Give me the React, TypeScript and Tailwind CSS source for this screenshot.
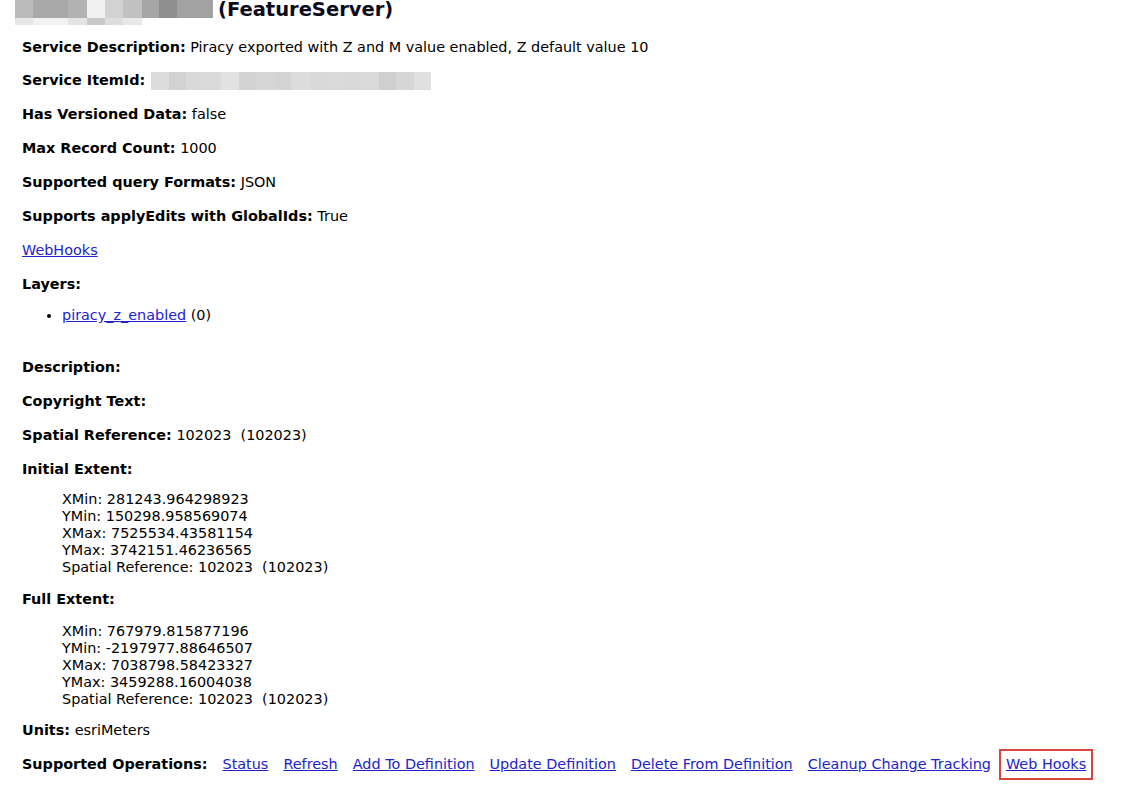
import React from "react";

const F = { fontFamily: '"DejaVu Sans", Verdana, sans-serif' };

function Row({ label, children, className = "" }: { label: string; children?: React.ReactNode; className?: string }) {
  return (
    <div className={"h-[17px] leading-[17px] whitespace-nowrap " + className}>
      <b className="font-bold">{label}</b> {children}
    </div>
  );
}

function Link({ children }: { children: React.ReactNode }) {
  return <a href="#" className="text-[#2222cc] underline">{children}</a>;
}

const titleTiles = [
  { w: 18, c: "#bbbbbb", b: "#e6e6e6" },
  { w: 35, c: "#a9a9a9", b: "#f2f2f2" },
  { w: 19, c: "#b2b2b2", b: "#e4e4e4" },
  { w: 18, c: "#f1f1f1", b: "#c9c9c9" },
  { w: 18, c: "#d2d2d5", b: "#dddddd" },
  { w: 19, c: "#c1c1c1", b: "#e8e8e8" },
  { w: 17, c: "#a6a6a6", b: "#ffffff" },
  { w: 18, c: "#8f8f8f", b: "#ffffff" },
  { w: 36, c: "#a2a2a2", b: "#ffffff" },
];

const idTiles = ["#dcdcdc", "#d2d2d2", "#d9d9d9", "#dadada", "#e2e2e2", "#d3d3d3", "#d6d6d6", "#d4d4d4", "#dcdcdc", "#d9d9d9", "#dadada", "#d8d8d8", "#dadada", "#cfcfcf", "#d6d6d6", "#e0e0e0"];

export default function App() {
  return (
    <div className="w-[1130px] h-[788px] bg-white text-black text-[14.4px] overflow-hidden" style={F}>
      <div className="flex items-start h-[26px] pl-[15px]">
        <div className="flex flex-col">
          <div className="flex h-[18px]">
            {titleTiles.map((t, i) => (
              <div key={i} className="h-[18px]" style={{ width: t.w, background: t.c }} />
            ))}
          </div>
          <div className="flex h-[7px]">
            {titleTiles.map((t, i) => (
              <div key={i} className="h-[7px]" style={{ width: t.w, background: t.b }} />
            ))}
          </div>
        </div>
        <div className="ml-[5px] text-[19.5px] font-bold leading-[20px] text-[#0a0a1a]">(FeatureServer)</div>
      </div>
      <div className="pl-[22px] flex flex-col">
        <Row label="Service Description:" className="mt-[13px]">Piracy exported with Z and M value enabled, Z default value 10</Row>
        <div className="mt-[16px] h-[17px] leading-[17px] flex items-center whitespace-nowrap">
          <b>Service ItemId:</b>
          <div className="flex ml-[6px] h-[18px]">
            {idTiles.map((c, i) => (
              <div key={i} className="w-[17.5px] h-[18px]" style={{ background: c }} />
            ))}
          </div>
        </div>
        <Row label="Has Versioned Data:" className="mt-[17px]">false</Row>
        <Row label="Max Record Count:" className="mt-[17px]">1000</Row>
        <Row label="Supported query Formats:" className="mt-[17px]">JSON</Row>
        <Row label="Supports applyEdits with GlobalIds:" className="mt-[17px]">True</Row>
        <div className="mt-[17px] h-[17px] leading-[17px]"><Link>WebHooks</Link></div>
        <Row label="Layers:" className="mt-[17px]" />
        <ul className="mt-[14px] pl-[40px] list-disc">
          <li className="h-[17px] leading-[17px]"><Link>piracy_z_enabled</Link> (0)</li>
        </ul>
        <Row label="Description:" className="mt-[35px]" />
        <Row label="Copyright Text:" className="mt-[17px]" />
        <Row label="Spatial Reference:" className="mt-[17px]">102023&nbsp;&nbsp;(102023)</Row>
        <Row label="Initial Extent:" className="mt-[17px]" />
        <div className="mt-[13px] pl-[40px] leading-[17px]">
          <div>XMin: 281243.964298923</div>
          <div>YMin: 150298.958569074</div>
          <div>XMax: 7525534.43581154</div>
          <div>YMax: 3742151.46236565</div>
          <div>Spatial Reference: 102023&nbsp;&nbsp;(102023)</div>
        </div>
        <Row label="Full Extent:" className="mt-[15px]" />
        <div className="mt-[15px] pl-[40px] leading-[17px]">
          <div>XMin: 767979.815877196</div>
          <div>YMin: -2197977.88646507</div>
          <div>XMax: 7038798.58423327</div>
          <div>YMax: 3459288.16004038</div>
          <div>Spatial Reference: 102023&nbsp;&nbsp;(102023)</div>
        </div>
        <Row label="Units:" className="mt-[14px]">esriMeters</Row>
        <div className="mt-[17px] h-[17px] leading-[17px] flex items-center whitespace-nowrap">
          <b>Supported Operations:</b>
          <span className="ml-[15px]"><Link>Status</Link></span>
          <span className="ml-[15px]"><Link>Refresh</Link></span>
          <span className="ml-[15px]"><Link>Add To Definition</Link></span>
          <span className="ml-[15px]"><Link>Update Definition</Link></span>
          <span className="ml-[15px]"><Link>Delete From Definition</Link></span>
          <span className="ml-[15px]"><Link>Cleanup Change Tracking</Link></span>
          <span className="ml-[8px] border-2 border-[#d9443e] px-[5px] py-[5px] leading-[17px]"><Link>Web Hooks</Link></span>
        </div>
      </div>
    </div>
  );
}
